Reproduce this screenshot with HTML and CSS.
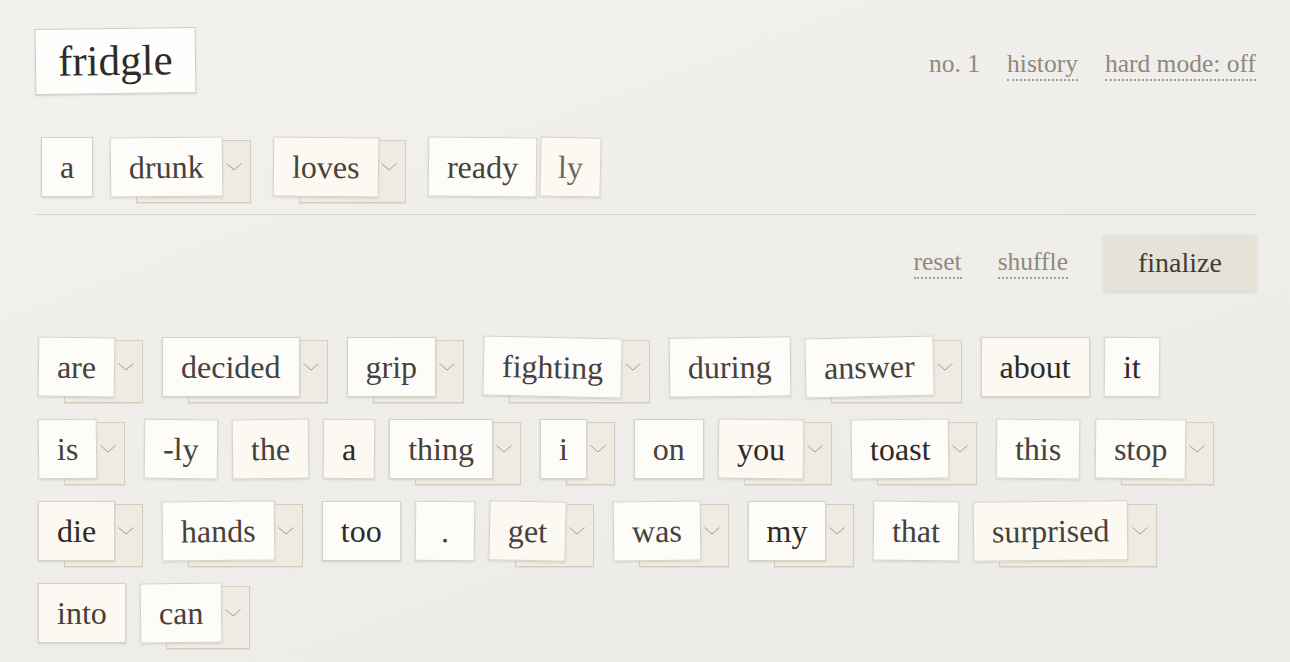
FILE: index.html
```html
<!DOCTYPE html>
<html>
<head>
  <meta charset="utf-8">
  <title>fridgle</title>
  <link rel="stylesheet" href="styles.css">
</head>
<body>

<div class="page">

  <!-- top bar: logo tile + links -->
  <div class="topbar">
    <div class="logo">fridgle</div>
    <div class="nav">
      <span class="num">no. 1</span>
      <span class="link">history</span>
      <span class="link">hard mode: off</span>
    </div>
  </div>

  <!-- the sentence being built -->
  <div class="sentence">
    <div class="tile"><span class="word">a</span></div>
    <div class="tile drop"><span class="word r-n1">drunk</span><span class="more"><svg width="16" height="8" viewBox="0 0 16 8"><polyline points="0.5,0.5 8,7 15.5,0.5" /></svg></span></div>
    <div class="tile drop"><span class="word warm r-p1">loves</span><span class="more"><svg width="16" height="8" viewBox="0 0 16 8"><polyline points="0.5,0.5 8,7 15.5,0.5" /></svg></span></div>
    <div class="joined">
      <div class="tile"><span class="word r-p1">ready</span></div>
      <div class="tile"><span class="word warm suffix r-p2">ly</span></div>
    </div>
  </div>

  <hr class="rule">

  <div class="actions">
    <span class="link">reset</span>
    <span class="link">shuffle</span>
    <button class="finalize">finalize</button>
  </div>

  <!-- word bank -->
  <div class="bank">
    <div class="row">
      <div class="tile drop"><span class="word r-p1">are</span><span class="more"><svg width="16" height="8" viewBox="0 0 16 8"><polyline points="0.5,0.5 8,7 15.5,0.5" /></svg></span></div>
      <div class="tile drop"><span class="word">decided</span><span class="more"><svg width="16" height="8" viewBox="0 0 16 8"><polyline points="0.5,0.5 8,7 15.5,0.5" /></svg></span></div>
      <div class="tile drop"><span class="word">grip</span><span class="more"><svg width="16" height="8" viewBox="0 0 16 8"><polyline points="0.5,0.5 8,7 15.5,0.5" /></svg></span></div>
      <div class="tile drop"><span class="word r-p2">fighting</span><span class="more"><svg width="16" height="8" viewBox="0 0 16 8"><polyline points="0.5,0.5 8,7 15.5,0.5" /></svg></span></div>
      <div class="tile"><span class="word r-n1">during</span></div>
      <div class="tile drop"><span class="word r-n2">answer</span><span class="more"><svg width="16" height="8" viewBox="0 0 16 8"><polyline points="0.5,0.5 8,7 15.5,0.5" /></svg></span></div>
      <div class="tile"><span class="word warm dark">about</span></div>
      <div class="tile"><span class="word dark r-p1">it</span></div>
    </div>

    <div class="row">
      <div class="tile drop"><span class="word r-n1">is</span><span class="more"><svg width="16" height="8" viewBox="0 0 16 8"><polyline points="0.5,0.5 8,7 15.5,0.5" /></svg></span></div>
      <div class="tile"><span class="word r-p1">-ly</span></div>
      <div class="tile"><span class="word warm r-n1">the</span></div>
      <div class="tile"><span class="word warm dark r-p1">a</span></div>
      <div class="tile drop"><span class="word">thing</span><span class="more"><svg width="16" height="8" viewBox="0 0 16 8"><polyline points="0.5,0.5 8,7 15.5,0.5" /></svg></span></div>
      <div class="tile drop"><span class="word">i</span><span class="more"><svg width="16" height="8" viewBox="0 0 16 8"><polyline points="0.5,0.5 8,7 15.5,0.5" /></svg></span></div>
      <div class="tile"><span class="word">on</span></div>
      <div class="tile drop"><span class="word warm dark r-p1">you</span><span class="more"><svg width="16" height="8" viewBox="0 0 16 8"><polyline points="0.5,0.5 8,7 15.5,0.5" /></svg></span></div>
      <div class="tile drop"><span class="word dark r-n1">toast</span><span class="more"><svg width="16" height="8" viewBox="0 0 16 8"><polyline points="0.5,0.5 8,7 15.5,0.5" /></svg></span></div>
      <div class="tile"><span class="word r-p1">this</span></div>
      <div class="tile drop"><span class="word r-p1">stop</span><span class="more"><svg width="16" height="8" viewBox="0 0 16 8"><polyline points="0.5,0.5 8,7 15.5,0.5" /></svg></span></div>
    </div>

    <div class="row">
      <div class="tile drop"><span class="word warm dark">die</span><span class="more"><svg width="16" height="8" viewBox="0 0 16 8"><polyline points="0.5,0.5 8,7 15.5,0.5" /></svg></span></div>
      <div class="tile drop"><span class="word r-n1">hands</span><span class="more"><svg width="16" height="8" viewBox="0 0 16 8"><polyline points="0.5,0.5 8,7 15.5,0.5" /></svg></span></div>
      <div class="tile"><span class="word dark">too</span></div>
      <div class="tile"><span class="word punct r-p1">.</span></div>
      <div class="tile drop"><span class="word warm r-p2">get</span><span class="more"><svg width="16" height="8" viewBox="0 0 16 8"><polyline points="0.5,0.5 8,7 15.5,0.5" /></svg></span></div>
      <div class="tile drop"><span class="word r-n1">was</span><span class="more"><svg width="16" height="8" viewBox="0 0 16 8"><polyline points="0.5,0.5 8,7 15.5,0.5" /></svg></span></div>
      <div class="tile drop"><span class="word dark">my</span><span class="more"><svg width="16" height="8" viewBox="0 0 16 8"><polyline points="0.5,0.5 8,7 15.5,0.5" /></svg></span></div>
      <div class="tile"><span class="word r-p1">that</span></div>
      <div class="tile drop"><span class="word warm r-n1">surprised</span><span class="more"><svg width="16" height="8" viewBox="0 0 16 8"><polyline points="0.5,0.5 8,7 15.5,0.5" /></svg></span></div>
    </div>

    <div class="row">
      <div class="tile"><span class="word warm">into</span></div>
      <div class="tile drop"><span class="word r-n1">can</span><span class="more"><svg width="16" height="8" viewBox="0 0 16 8"><polyline points="0.5,0.5 8,7 15.5,0.5" /></svg></span></div>
    </div>
  </div>

</div>

</body>
</html>
```

FILE: styles.css
```css
/* fridgle - magnet poetry */
html, body {
  margin: 0;
  height: 100%;
}
body {
  background: linear-gradient(160deg, #f2f1ee 0%, #eeede9 60%, #ecebe7 100%);
  font-family: "Liberation Serif", "Times New Roman", serif;
  color: #3b3833;
  overflow: hidden;
}
.page {
  padding: 28px 34px 0 35px;
}

/* top bar */
.topbar {
  display: flex;
  justify-content: space-between;
  align-items: center;
}
.logo {
  background: #fefefd;
  border: 1px solid #cfcdc2;
  box-shadow: 0 1px 2px rgba(60, 55, 40, 0.18);
  font-size: 43px;
  line-height: 64px;
  padding: 0 22px;
  color: #2f2c27;
  transform: rotate(-0.8deg);
}
.nav {
  display: flex;
  gap: 27px;
  font-size: 25.5px;
  line-height: 30px;
  margin-top: 8px;
  color: #8e897d;
}
.link {
  color: #8e897d;
  border-bottom: 2px dotted #a29e92;
  cursor: pointer;
}

/* sentence */
.sentence {
  display: flex;
  gap: 17px;
  margin-top: 43px;
  padding-left: 6px;
}
.joined {
  display: flex;
  gap: 3px;
}
.rule {
  border: 0;
  border-top: 1px solid #d5d3cc;
  margin: 17px 0 0;
}

/* reset / shuffle / finalize */
.actions {
  display: flex;
  justify-content: flex-end;
  align-items: center;
  gap: 36px;
  margin-top: 20px;
  font-size: 25.5px;
}
.finalize {
  font-family: inherit;
  font-size: 28px;
  color: #403d36;
  background: #e5e3d8;
  border: 0;
  width: 152px;
  height: 56px;
  box-shadow: 0 1px 3px rgba(60, 55, 40, 0.16);
  cursor: pointer;
}

/* word bank */
.bank {
  margin-top: 46px;
  padding-left: 3px;
  display: flex;
  flex-direction: column;
  gap: 22px;
}
.row {
  display: flex;
  gap: 14px;
}

/* word tiles */
.tile {
  position: relative;
  display: flex;
  align-items: center;
  height: 60px;
}
.tile.drop {
  margin-right: 5px;
}
.tile.drop::before {
  content: "";
  position: absolute;
  left: 26px;
  right: 0;
  top: 3px;
  bottom: -6px;
  background: #edebe2;
  border: 1px solid #d2cfc1;
  box-shadow: 0 1px 1px rgba(60, 55, 40, 0.08);
}
.word {
  position: relative;
  box-sizing: border-box;
  height: 60px;
  line-height: 58px;
  padding: 0 18px;
  font-size: 32px;
  background: #fdfcf9;
  border: 1px solid #d4d2c6;
  box-shadow: 0 1px 2px rgba(60, 55, 40, 0.16);
  color: #45423c;
  white-space: nowrap;
}
.word.warm {
  background: #fbf9f1;
}
.word.dark {
  color: #2e2b26;
}
.word.suffix {
  color: #6d685e;
  padding: 0 17px;
}
.word.punct {
  padding: 0 25px;
}
.more {
  position: relative;
  width: 28px;
  height: 60px;
  display: flex;
  align-items: center;
  padding-left: 3px;
  box-sizing: border-box;
}
.more svg {
  fill: none;
  stroke: #a19d91;
  stroke-width: 1;
}

/* slight tilt so tiles look hand-placed */
.r-n2 { transform: rotate(-1.3deg); }
.r-n1 { transform: rotate(-0.6deg); }
.r-p1 { transform: rotate(0.6deg); }
.r-p2 { transform: rotate(1.2deg); }
```
